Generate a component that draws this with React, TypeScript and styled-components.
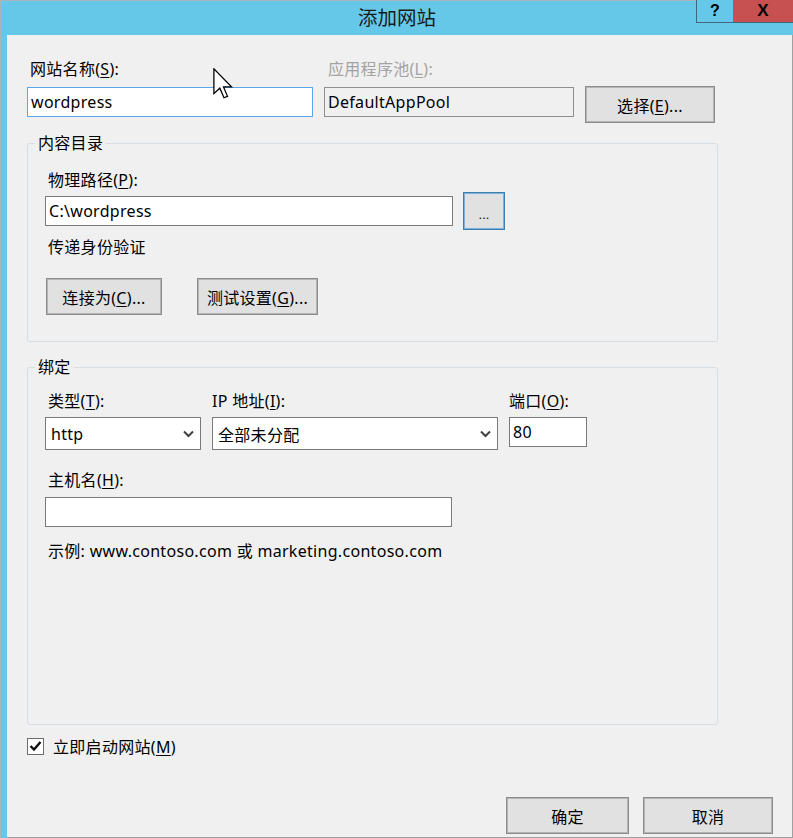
import React from "react";
import styled, { createGlobalStyle } from "styled-components";

const GlobalStyle = createGlobalStyle`
  html, body {
    margin: 0;
    padding: 0;
    background: #f0f0f0;
  }
  body {
    font-family: "Noto Sans", "Noto Sans CJK SC", sans-serif;
    overflow: hidden;
  }
  * {
    box-sizing: border-box;
  }
`;

const Frame = styled.div`
  position: relative;
  width: 793px;
  height: 838px;
  display: flex;
  flex-direction: column;
  background: #66c8e8;
  border-top: 1px solid #a9b4b9;
  border-left: 1px solid #a9b4b9;
`;

const TitleBar = styled.div`
  flex: none;
  height: 34px;
  display: grid;
  grid-template-columns: 1fr auto 1fr;
`;

const Title = styled.div`
  grid-column: 2;
  font-family: "Noto Sans CJK SC", sans-serif;
  font-size: 19.5px;
  line-height: 32px;
  color: #1a1a1a;
`;

const Controls = styled.div`
  grid-column: 3;
  justify-self: end;
  align-self: start;
  margin-top: -1px;
  display: flex;
`;

const CtrlButton = styled.div<{ $close?: boolean }>`
  width: ${(p) => (p.$close ? 60 : 37)}px;
  height: 23px;
  display: flex;
  align-items: center;
  justify-content: center;
  background: ${(p) => (p.$close ? "#c75050" : "#66c8e8")};
  border-bottom: 1px solid #3f6878;
  border-left: ${(p) => (p.$close ? "none" : "1px solid #3f6878")};
  font-family: "Liberation Sans", sans-serif;
  font-weight: bold;
  font-size: ${(p) => (p.$close ? 17 : 16)}px;
  color: #000;
`;

const Body = styled.div`
  flex: 1;
  margin-left: 6px;
  background: #f0f0f0;
  border-right: 1px solid #a0a0a0;
  border-bottom: 1px solid #a0a0a0;
  display: flex;
  flex-direction: column;
  padding: 23px 19px 3px 20px;
  font-size: 16px;
  letter-spacing: 0.3px;
  color: #000;
`;

const TopRow = styled.div`
  width: 690px;
  display: grid;
  grid-template-columns: 286px 250px 130px;
  column-gap: 11px;
`;

const Field = styled.div`
  display: flex;
  flex-direction: column;
`;

const ButtonCell = styled.div`
  display: flex;
  align-items: flex-start;
  padding-top: 28px;
`;

const Label = styled.div<{ $gap?: number; $inset?: number; $disabled?: boolean; $mt?: number }>`
  line-height: 22px;
  white-space: nowrap;
  margin-top: ${(p) => p.$mt ?? 0}px;
  margin-bottom: ${(p) => p.$gap ?? 5}px;
  margin-left: ${(p) => p.$inset ?? 0}px;
  color: ${(p) => (p.$disabled ? "#a3a3a3" : "#000")};
`;

const Key = styled.span`
  text-decoration: underline;
  text-underline-offset: 2px;
`;

const TextBox = styled.input<{ $width?: number; $focused?: boolean; $disabled?: boolean }>`
  width: ${(p) => (p.$width ? `${p.$width}px` : "100%")};
  height: 30px;
  margin: 0;
  padding: 0 3px;
  font: inherit;
  font-size: 16px;
  letter-spacing: 0.3px;
  color: #000;
  outline: none;
  background: ${(p) => (p.$disabled ? "#f0f0f0" : "#fff")};
  border: 1px solid ${(p) => (p.$focused ? "#5aa6e6" : p.$disabled ? "#8f8f8f" : "#7a7a7a")};
  border-radius: 0;
`;

const Button = styled.button<{ $width: number; $default?: boolean }>`
  width: ${(p) => p.$width}px;
  height: 37px;
  margin: 0;
  padding: 0;
  font: inherit;
  font-size: 16px;
  letter-spacing: 0.3px;
  color: #000;
  background: #e1e1e1;
  border: 1px solid ${(p) => (p.$default ? "#3c7fb1" : "#8c8c8c")};
  box-shadow: inset 0 0 0 1px ${(p) => (p.$default ? "#7eb0dc" : "#b4b4b4")};
  border-radius: 0;
  white-space: nowrap;
`;

const Group = styled.fieldset<{ $pt: number; $grow?: boolean }>`
  width: 691px;
  min-width: 0;
  margin: ${(p) => (p.$grow ? "14px 0 0" : "9px 0 0")};
  padding: ${(p) => p.$pt}px 17px 26px 17px;
  border: 1px solid #d6dee4;
  border-radius: 3px;
  ${(p) => (p.$grow ? "flex: 1;" : "")}
`;

const Legend = styled.legend`
  margin-left: -10px;
  padding: 0 3px;
  line-height: 22px;
  font-size: 16px;
`;

const PathRow = styled.div`
  display: flex;
  align-items: center;
  gap: 10px;
  height: 38px;
`;

const EllipsisButton = styled(Button)`
  height: 38px;
  padding-top: 7px;
  font-family: "Liberation Sans", sans-serif;
  font-size: 13px;
  letter-spacing: 0;
`;

const ButtonRow = styled.div`
  display: flex;
  gap: 35px;
  margin-top: 20px;
  margin-left: 1px;
`;

const BindRow = styled.div`
  display: flex;
  gap: 11px;
`;

const Select = styled.div<{ $width: number }>`
  width: ${(p) => p.$width}px;
  height: 33px;
  display: flex;
  align-items: center;
  justify-content: space-between;
  padding: 0 6px 0 5px;
  background: #fff;
  border: 1px solid #7a7a7a;
`;

const Hint = styled.div`
  margin: 13px 0 0 3px;
  line-height: 22px;
`;

const CheckRow = styled.div`
  display: flex;
  align-items: center;
  gap: 9px;
  height: 22px;
  margin-top: 10px;
`;

const CheckBox = styled.div`
  width: 17px;
  height: 17px;
  background: #fff;
  border: 1px solid #6d6d6d;
  display: flex;
  align-items: center;
  justify-content: center;
`;

const Footer = styled.div`
  display: flex;
  justify-content: flex-end;
  gap: 14px;
  margin-top: 40px;
`;

const Cursor = styled.svg`
  position: absolute;
  left: 212px;
  top: 67px;
`;

const Chevron = () => (
  <svg width="11" height="8" viewBox="0 0 11 8">
    <polyline points="1,1.5 5.5,6 10,1.5" fill="none" stroke="#404040" strokeWidth="2" />
  </svg>
);

export default function App() {
  return (
    <Frame>
      <GlobalStyle />
      <TitleBar>
        <Title>添加网站</Title>
        <Controls>
          <CtrlButton>?</CtrlButton>
          <CtrlButton $close>X</CtrlButton>
        </Controls>
      </TitleBar>
      <Body>
        <TopRow>
          <Field>
            <Label $gap={7} $inset={3}>
              网站名称(<Key>S</Key>):
            </Label>
            <TextBox $focused readOnly value="wordpress" />
          </Field>
          <Field>
            <Label $gap={7} $inset={4} $disabled>
              应用程序池(<Key>L</Key>):
            </Label>
            <TextBox $disabled readOnly value="DefaultAppPool" />
          </Field>
          <ButtonCell>
            <Button $width={130}>
              选择(<Key>E</Key>)...
            </Button>
          </ButtonCell>
        </TopRow>

        <Group $pt={15}>
          <Legend>内容目录</Legend>
          <Label $gap={1} $inset={3}>
            物理路径(<Key>P</Key>):
          </Label>
          <PathRow>
            <TextBox $width={408} readOnly value="C:\wordpress" />
            <EllipsisButton $width={42} $default>
              ...
            </EllipsisButton>
          </PathRow>
          <Label $mt={6} $gap={0} $inset={3}>
            传递身份验证
          </Label>
          <ButtonRow>
            <Button $width={116}>
              连接为(<Key>C</Key>)...
            </Button>
            <Button $width={121}>
              测试设置(<Key>G</Key>)...
            </Button>
          </ButtonRow>
        </Group>

        <Group $pt={12} $grow>
          <Legend>绑定</Legend>
          <BindRow>
            <Field>
              <Label $inset={3}>
                类型(<Key>T</Key>):
              </Label>
              <Select $width={156}>
                <span>http</span>
                <Chevron />
              </Select>
            </Field>
            <Field>
              <Label>
                IP 地址(<Key>I</Key>):
              </Label>
              <Select $width={286}>
                <span>全部未分配</span>
                <Chevron />
              </Select>
            </Field>
            <Field>
              <Label>
                端口(<Key>O</Key>):
              </Label>
              <TextBox $width={78} readOnly value="80" />
            </Field>
          </BindRow>
          <Label $mt={19} $gap={6} $inset={3}>
            主机名(<Key>H</Key>):
          </Label>
          <TextBox $width={407} readOnly value="" />
          <Hint>示例: www.contoso.com 或 marketing.contoso.com</Hint>
        </Group>

        <CheckRow>
          <CheckBox>
            <svg width="13" height="12" viewBox="0 0 13 12">
              <polyline points="1.5,6 5,9.5 11.5,2" fill="none" stroke="#111" strokeWidth="2.4" />
            </svg>
          </CheckBox>
          <span>
            立即启动网站(<Key>M</Key>)
          </span>
        </CheckRow>

        <Footer>
          <Button $width={123}>确定</Button>
          <Button $width={130}>取消</Button>
        </Footer>
      </Body>
      <Cursor width="21" height="32" viewBox="0 0 13 20">
        <path
          d="M0.5 0.5 L0.5 16 L4.2 12.6 L6.8 18.6 L9 17.7 L6.5 11.8 L11.5 11.8 Z"
          fill="#fff"
          stroke="#000"
          strokeWidth="0.8"
          strokeLinejoin="miter"
        />
      </Cursor>
    </Frame>
  );
}
